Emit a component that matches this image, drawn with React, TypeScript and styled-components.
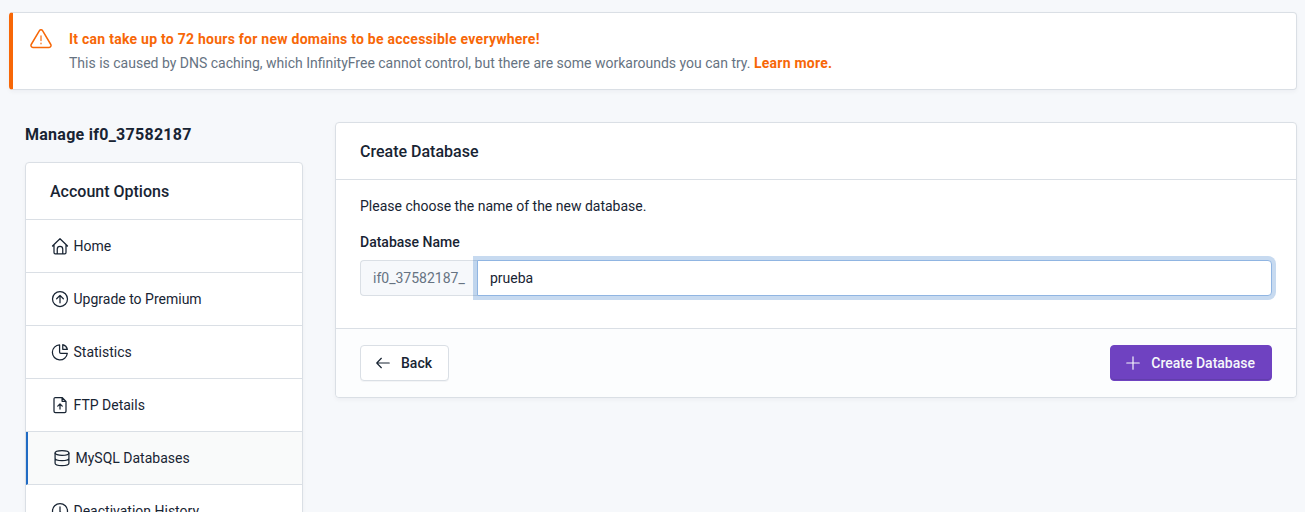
import React from "react";
import styled, { createGlobalStyle } from "styled-components";

const Global = createGlobalStyle`
  *, *::before, *::after { box-sizing: border-box; }
  body {
    margin: 0;
    background: #f6f8fb;
    color: #182433;
    font-family: Roboto, "Liberation Sans", sans-serif;
    font-size: 14px;
    line-height: 20px;
  }
  h2, h3, h4, p { margin: 0; }
`;

const Page = styled.div`
  height: 100vh;
  overflow: hidden;
  padding: 12px 8px 0 9px;
`;

const Alert = styled.section`
  display: flex;
  height: 78px;
  padding: 16px;
  background: #fff;
  border: 1px solid #dadfe5;
  border-left: 4px solid #f76707;
  border-radius: 4px;
  box-shadow: rgba(24, 36, 51, 0.04) 0 2px 4px 0;
`;

const AlertIcon = styled.div`
  width: 24px;
  margin: -2px 16px 0 0;
  color: #f76707;
  svg { display: block; }
`;

const AlertTitle = styled.h4`
  font-size: 14px;
  line-height: 20px;
  font-weight: 700;
  letter-spacing: 0.25px;
  color: #f76707;
  margin-bottom: 4px;
`;

const AlertText = styled.p`
  color: #667382;
`;

const AlertLink = styled.a`
  color: #f76707;
  font-weight: 700;
  letter-spacing: 0.25px;
`;

const Columns = styled.div`
  display: grid;
  grid-template-columns: 278px 962px;
  column-gap: 32px;
  padding: 32px 0 0 16px;
  align-items: start;
`;

const PageTitle = styled.h2`
  font-size: 16px;
  line-height: 24px;
  font-weight: 700;
  letter-spacing: 0.27px;
  padding-top: 1px;
  margin-bottom: 15px;
`;

const Card = styled.section`
  background: #fff;
  border: 1px solid #dadfe5;
  border-radius: 4px;
  box-shadow: rgba(24, 36, 51, 0.04) 0 2px 4px 0;
`;

const CardHeader = styled.div`
  height: 57px;
  padding: 17px 24px 15px;
  border-bottom: 1px solid #dadfe5;
`;

const CardTitle = styled.h3`
  font-size: 16px;
  line-height: 24px;
  font-weight: 500;
`;

const MenuItem = styled.a<{ $active?: boolean }>`
  display: flex;
  align-items: center;
  gap: 3.500px;
  height: 53px;
  padding: 0 24px;
  border-bottom: 1px solid #dadfe5;
  border-left: ${(p) => (p.$active ? "2px solid #206bc4" : "0")};
  background: ${(p) => (p.$active ? "#f9fafa" : "transparent")};
  svg { flex: none; }
`;

const FormBody = styled.div`
  padding: 16px 24px 32px;
`;

const Label = styled.label`
  display: block;
  font-weight: 500;
  margin: 16px 0 8px;
`;

const InputGroup = styled.div`
  display: flex;
  height: 36px;
`;

const Prefix = styled.span`
  width: 118px;
  padding: 7px 0 7px 12px;
  border: 1px solid #dadfe5;
  border-right: 0;
  border-radius: 4px 0 0 4px;
  background: #f6f8fb;
  color: #667382;
`;

const Input = styled.input`
  flex: 1;
  min-width: 0;
  margin-left: -1px;
  padding: 7px 12px;
  border: 1px solid #90b5e2;
  border-radius: 0 4px 4px 0;
  outline: 0;
  background: #fff;
  color: #182433;
  font: inherit;
  box-shadow: 0 0 0 4px rgba(32, 107, 196, 0.25);
`;

const CardFooter = styled.div`
  display: flex;
  justify-content: space-between;
  padding: 16px 24px;
  border-top: 1px solid #dadfe5;
  border-radius: 0 0 4px 4px;
  background: #fcfdfe;
`;

const Button = styled.button<{ $primary?: boolean }>`
  display: flex;
  align-items: center;
  height: 36px;
  padding: 0 16px 0 12px;
  gap: 8px;
  border: 1px solid ${(p) => (p.$primary ? "#6f42c1" : "#dadfe5")};
  border-radius: 4px;
  background: ${(p) => (p.$primary ? "#6f42c1" : "#fff")};
  color: ${(p) => (p.$primary ? "#f6f8fb" : "#182433")};
  font: 500 14px/20px Roboto, "Liberation Sans", sans-serif;
  box-shadow: ${(p) => (p.$primary ? "inset 0 -1px 0 rgba(24,36,51,.15)" : "0 1px 0 rgba(24,36,51,.04)")};
`;

const Stroke = styled.svg`
  fill: none;
  stroke: currentColor;
  stroke-linecap: round;
  stroke-linejoin: round;
`;

type IconProps = { size?: number; weight?: number; children: React.ReactNode };

const Icon = ({ size = 20, weight = 1.5, children }: IconProps) => (
  <Stroke width={size} height={size} viewBox="0 0 24 24" strokeWidth={weight}>
    {children}
  </Stroke>
);

const items = [
  {
    label: "Home",
    icon: <path d="M3 12 12 3.300 21 12M4.800 10.500v9.300a1.500 1.500 0 0 0 1.500 1.500h11.400a1.500 1.500 0 0 0 1.500-1.500v-9.300M8.700 21v-5.200a3.300 3.300 0 0 1 6.600 0V21" />,
  },
  {
    label: "Upgrade to Premium",
    icon: <><circle cx="12" cy="12" r="9" /><path d="M12 16.500V8M8 11.700l4-4 4 4" /></>,
  },
  {
    label: "Statistics",
    icon: <path d="M11.500 3.500A9 9 0 1 0 20.800 13.500H13a1.500 1.500 0 0 1-1.500-1.500zM15.300 3.200v5.600h5.600a8 8 0 0 0-5.600-5.600z" />,
  },
  {
    label: "FTP Details",
    icon: <path d="M14.500 3v4.500H19M6.500 3h8l4.700 4.700v11.800a1.700 1.700 0 0 1-1.700 1.700h-11a1.700 1.700 0 0 1-1.700-1.700V4.700A1.700 1.700 0 0 1 6.500 3zM12 16.800v-5.500M9.300 13.300l2.700-2.700 2.700 2.700" />,
  },
  {
    label: "MySQL Databases",
    active: true,
    icon: <><ellipse cx="12" cy="6" rx="8.300" ry="2.900" /><path d="M3.700 6v12.300c0 1.700 3.700 2.900 8.300 2.900s8.300-1.200 8.300-2.900V6M3.700 12.200c0 1.700 3.700 2.900 8.300 2.900s8.300-1.200 8.300-2.900" /></>,
  },
  {
    label: "Deactivation History",
    icon: <><circle cx="12" cy="12" r="9" /><path d="M12 7v6l3 2" /></>,
  },
];

export default function App() {
  return (
    <>
      <Global />
      <Page>
        <Alert>
          <AlertIcon>
            <Icon size={24}>
              <path d="M10.300 3.800 2.200 17.500a2 2 0 0 0 1.700 3h16.200a2 2 0 0 0 1.700-3L13.700 3.800a2 2 0 0 0-3.400 0z" />
              <path d="M12 9v4.500M12 16.300v.400" strokeOpacity="0.8" />
            </Icon>
          </AlertIcon>
          <div>
            <AlertTitle>It can take up to 72 hours for new domains to be accessible everywhere!</AlertTitle>
            <AlertText>
              This is caused by DNS caching, which InfinityFree cannot control, but there are some workarounds you can try.{" "}
              <AlertLink>Learn more.</AlertLink>
            </AlertText>
          </div>
        </Alert>
        <Columns>
          <aside>
            <PageTitle>Manage if0_37582187</PageTitle>
            <Card>
              <CardHeader><CardTitle>Account Options</CardTitle></CardHeader>
              <nav>
                {items.map((item) => (
                  <MenuItem key={item.label} $active={item.active}>
                    <Icon>{item.icon}</Icon>
                    <span>{item.label}</span>
                  </MenuItem>
                ))}
              </nav>
            </Card>
          </aside>
          <Card>
            <CardHeader><CardTitle>Create Database</CardTitle></CardHeader>
            <FormBody>
              <p>Please choose the name of the new database.</p>
              <Label htmlFor="name">Database Name</Label>
              <InputGroup>
                <Prefix>if0_37582187_</Prefix>
                <Input id="name" defaultValue="prueba" />
              </InputGroup>
            </FormBody>
            <CardFooter>
              <Button>
                <Icon><path d="M19.500 12H4.500M10 6.300 4.500 12l5.500 5.700" strokeWidth="1.400" /></Icon>
                Back
              </Button>
              <Button $primary>
                <Icon><path d="M12 4.500v15M4.500 12h15" strokeWidth="1.400" /></Icon>
                Create Database
              </Button>
            </CardFooter>
          </Card>
        </Columns>
      </Page>
    </>
  );
}
